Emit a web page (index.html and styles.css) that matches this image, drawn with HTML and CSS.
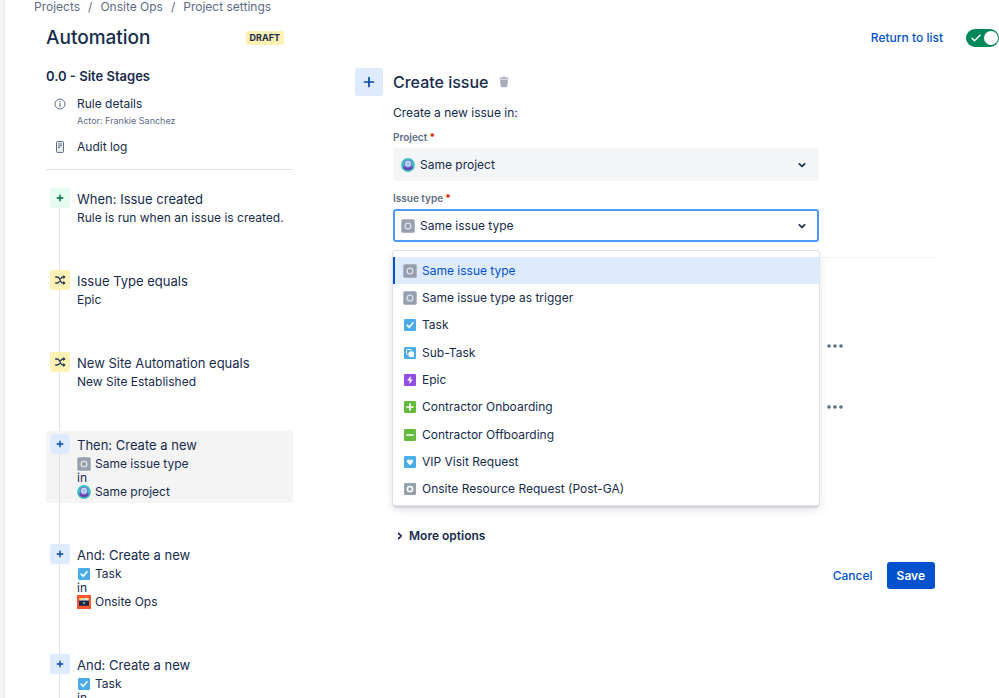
FILE: index.html
```html
<!DOCTYPE html>
<html lang="en">
<head>
<meta charset="utf-8">
<meta name="viewport" content="width=device-width, initial-scale=1">
<title>Automation</title>
<link rel="stylesheet" href="styles.css">
</head>
<body>
<svg class="sprite" aria-hidden="true">
  <symbol id="i-plus" viewBox="0 0 20 20"><path d="M10 7.200v5.600M7.200 10h5.600" stroke="currentColor" stroke-width="1.400" stroke-linecap="round"/></symbol>
  <symbol id="i-shuffle" viewBox="0 0 20 20"><g fill="none" stroke="currentColor" stroke-width="1.400" stroke-linecap="round"><path d="M5.700 7h1.500c1 0 1.500.4 2.100 1.300l1.600 3.200c.6 1 1.100 1.500 2.200 1.500h.9M5.700 13h1.500c1 0 1.500-.4 2.100-1.300M10.900 8.300c.6-.9 1.100-1.300 2.200-1.300h.9"/></g><path d="M13.200 4.900 15.700 7l-2.500 2.100zM13.200 10.900l2.500 2.100-2.500 2.100z" fill="currentColor"/></symbol>
  <symbol id="i-generic" viewBox="0 0 14 14"><rect x=".3" y=".3" width="13.400" height="13.400" rx="1.500" fill="#97a0af"/><circle cx="7" cy="7" r="2.900" fill="none" stroke="#dfe3e8" stroke-width="1.300"/></symbol>
  <symbol id="i-request" viewBox="0 0 14 14"><rect x="1" y="1" width="12" height="12" rx="1.200" fill="#97a0af"/><circle cx="7" cy="7" r="2.600" fill="none" stroke="#fff" stroke-width="1.500"/></symbol>
  <symbol id="i-task" viewBox="0 0 14 14"><rect x="1" y="1" width="12" height="12" rx="1.200" fill="#4bade8"/><path d="M4.200 7.200 6.200 9.300 10 4.800" fill="none" stroke="#fff" stroke-width="1.600" stroke-linecap="round" stroke-linejoin="round"/></symbol>
  <symbol id="i-subtask" viewBox="0 0 14 14"><rect x="1" y="1" width="12" height="12" rx="1.200" fill="#4bade8"/><rect x="3.500" y="3.500" width="4.800" height="4.800" rx=".8" fill="none" stroke="#fff"/><rect x="5.700" y="5.700" width="5.300" height="5.300" rx=".8" fill="#fff"/></symbol>
  <symbol id="i-epic" viewBox="0 0 14 14"><rect x="1" y="1" width="12" height="12" rx="1.200" fill="#904ee2"/><path d="M7.600 3 4.200 7.500h2.300V11l3.400-4.500H7.600z" fill="#fff"/></symbol>
  <symbol id="i-add" viewBox="0 0 14 14"><rect x="1" y="1" width="12" height="12" rx="1.200" fill="#63ba3c"/><path d="M7 4v6M4 7h6" stroke="#fff" stroke-width="1.700" stroke-linecap="round"/></symbol>
  <symbol id="i-remove" viewBox="0 0 14 14"><rect x="1" y="1" width="12" height="12" rx="1.200" fill="#63ba3c"/><path d="M4 7h6" stroke="#fff" stroke-width="1.700" stroke-linecap="round"/></symbol>
  <symbol id="i-heart" viewBox="0 0 14 14"><rect x="1" y="1" width="12" height="12" rx="1.200" fill="#4bade8"/><path d="M7 10.300 4.300 7.600C2.800 6 5 3.300 7 5.200c2-1.900 4.200.8 2.700 2.400z" fill="#fff"/></symbol>
  <symbol id="i-project" viewBox="0 0 14 14"><circle cx="7" cy="7" r="6.900" fill="#3cc0c4"/><path d="M2 8.200h10c-.2 2.500-2.300 4.100-5 4.100s-4.800-1.600-5-4.100z" fill="#6b3fa8"/><circle cx="7" cy="5.900" r="4" fill="#7b6fd6"/><circle cx="7" cy="5.700" r="2.900" fill="#cfe8f9"/><circle cx="7" cy="5.700" r="1.200" fill="none" stroke="#5f8fd0" stroke-width=".7"/></symbol>
  <symbol id="i-ops" viewBox="0 0 14 14"><path d="M0 0h14v14H0z" fill="#ff5630"/><path d="M2.300 3h9.400v3H2.300z" fill="#ffe3d6"/><path d="M3.300 3h2v1.500h-2z" fill="#ffc400"/><path d="M6 3h2v1.500H6z" fill="#79e2f2"/><path d="M2 5.500h10v5.300H2z" fill="#172b4d"/><circle cx="7" cy="8" r=".9" fill="#c1c7d0"/></symbol>
  <symbol id="i-chevron" viewBox="0 0 10 10"><path d="M2.300 3.800 5 6.300l2.700-2.500" fill="none" stroke="currentColor" stroke-width="1.700" stroke-linecap="round" stroke-linejoin="round"/></symbol>
  <symbol id="i-more" viewBox="0 0 16 6"><g fill="#5e6c84"><circle cx="2" cy="3" r="1.800"/><circle cx="8" cy="3" r="1.800"/><circle cx="14" cy="3" r="1.800"/></g></symbol>
</svg>

<div class="page">
  <nav class="crumbs" aria-label="Breadcrumbs">
    <a href="#">Projects</a><span>/</span><a href="#">Onsite Ops</a><span>/</span><a href="#">Project settings</a>
  </nav>

  <header class="header">
    <div class="header-title">
      <h1>Automation</h1>
      <span class="badge">DRAFT</span>
    </div>
    <div class="header-actions">
      <a href="#">Return to list</a>
      <label class="toggle">
        <input type="checkbox" checked aria-label="Rule enabled">
        <svg viewBox="0 0 10 8"><path d="M1 4.300 3.500 6.700 9 1.200" fill="none" stroke="#fff" stroke-width="1.500" stroke-linecap="round" stroke-linejoin="round"/></svg>
      </label>
    </div>
  </header>

  <div class="columns">
    <aside class="sidebar">
      <h2>0.0 - Site Stages</h2>
      <nav class="rule-nav">
        <a class="rule-link" href="#">
          <svg class="nav-icon" viewBox="0 0 12 12"><circle cx="6" cy="6" r="5" fill="none" stroke="#5e6c84"/><path d="M6 5.500v2.800" stroke="#5e6c84" stroke-width="1.200" stroke-linecap="round"/><circle cx="6" cy="3.700" r=".7" fill="#5e6c84"/></svg>
          <span class="rule-text">Rule details<small>Actor: Frankie Sanchez</small></span>
        </a>
        <a class="rule-link" href="#">
          <svg class="nav-icon" viewBox="0 0 12 12"><rect x="2.500" y=".6" width="7" height="10.800" rx=".8" fill="#ebecf0" stroke="#5e6c84"/><path d="M4 3h4M4 4.800h4M4 6.600h2" stroke="#5e6c84" stroke-width=".9"/></svg>
          <span class="rule-text">Audit log</span>
        </a>
      </nav>

      <ol class="steps">
        <li class="step">
          <span class="step-icon trigger"><svg><use href="#i-plus"/></svg></span>
          <div><h3>When: Issue created</h3><p>Rule is run when an issue is created.</p></div>
        </li>
        <li class="step">
          <span class="step-icon condition"><svg><use href="#i-shuffle"/></svg></span>
          <div><h3>Issue Type equals</h3><p>Epic</p></div>
        </li>
        <li class="step">
          <span class="step-icon condition"><svg><use href="#i-shuffle"/></svg></span>
          <div><h3>New Site Automation equals</h3><p>New Site Established</p></div>
        </li>
        <li class="step selected">
          <span class="step-icon action"><svg><use href="#i-plus"/></svg></span>
          <div><h3>Then: Create a new</h3>
            <p><svg class="type"><use href="#i-generic"/></svg>Same issue type</p><p>in</p>
            <p><svg class="type"><use href="#i-project"/></svg>Same project</p></div>
        </li>
        <li class="step">
          <span class="step-icon action"><svg><use href="#i-plus"/></svg></span>
          <div><h3>And: Create a new</h3>
            <p><svg class="type"><use href="#i-task"/></svg>Task</p><p>in</p>
            <p><svg class="type"><use href="#i-ops"/></svg>Onsite Ops</p></div>
        </li>
        <li class="step">
          <span class="step-icon action"><svg><use href="#i-plus"/></svg></span>
          <div><h3>And: Create a new</h3>
            <p><svg class="type"><use href="#i-task"/></svg>Task</p><p>in</p></div>
        </li>
      </ol>
    </aside>

    <main class="main">
      <div class="main-head">
        <span class="main-icon"><svg viewBox="0 0 28 28"><path d="M14 9.500v9M9.500 14h9" stroke="currentColor" stroke-width="1.700" stroke-linecap="round"/></svg></span>
        <h2>Create issue</h2>
        <button class="icon-btn" type="button" aria-label="Delete">
          <svg class="trash" viewBox="0 0 10 12"><path d="M.5 1.500h2.700L4 .6h2l.8.9h2.700v1.300h-9zM1 3.600h8l-.7 6.500c-.1.700-.5 1.200-1.200 1.200H2.900c-.7 0-1.100-.5-1.200-1.200z" fill="#a5adba"/></svg>
        </button>
      </div>

      <form class="form">
        <p class="intro">Create a new issue in:</p>
        <div class="field">
          <label for="project">Project<b>*</b></label>
          <div class="select">
            <select id="project"><option>Same project</option></select>
            <svg class="type"><use href="#i-project"/></svg>
            <svg class="chevron"><use href="#i-chevron"/></svg>
          </div>
        </div>
        <div class="field">
          <label for="type">Issue type<b>*</b></label>
          <div class="select open">
            <select id="type"><option>Same issue type</option></select>
            <svg class="type"><use href="#i-generic"/></svg>
            <svg class="chevron"><use href="#i-chevron"/></svg>
            <ul class="menu" role="listbox" aria-label="Issue type">
              <li role="option" aria-selected="true"><svg class="type"><use href="#i-generic"/></svg>Same issue type</li>
              <li role="option"><svg class="type"><use href="#i-generic"/></svg>Same issue type as trigger</li>
              <li role="option"><svg class="type"><use href="#i-task"/></svg>Task</li>
              <li role="option"><svg class="type"><use href="#i-subtask"/></svg>Sub-Task</li>
              <li role="option"><svg class="type"><use href="#i-epic"/></svg>Epic</li>
              <li role="option"><svg class="type"><use href="#i-add"/></svg>Contractor Onboarding</li>
              <li role="option"><svg class="type"><use href="#i-remove"/></svg>Contractor Offboarding</li>
              <li role="option"><svg class="type"><use href="#i-heart"/></svg>VIP Visit Request</li>
              <li role="option"><svg class="type"><use href="#i-request"/></svg>Onsite Resource Request (Post-GA)</li>
            </ul>
          </div>
        </div>

        <div class="extra">
          <button class="icon-btn" type="button" aria-label="Field actions"><svg class="more"><use href="#i-more"/></svg></button>
          <button class="icon-btn" type="button" aria-label="Field actions"><svg class="more"><use href="#i-more"/></svg></button>
        </div>

        <button class="more-options" type="button"><svg viewBox="0 0 10 10"><path d="M3.600 2.300 6.300 5 3.600 7.700" fill="none" stroke="currentColor" stroke-width="1.700" stroke-linecap="round" stroke-linejoin="round"/></svg>More options</button>

        <div class="actions">
          <button class="btn link" type="button">Cancel</button>
          <button class="btn primary" type="submit">Save</button>
        </div>
      </form>
    </main>
  </div>
</div>
</body>
</html>
```
FILE: styles.css
```css
* { box-sizing: border-box; }

body {
  margin: 0;
  background: #fff;
  color: #172b4d;
  font: 12px/16px Inter, "Liberation Sans", sans-serif;
}

h1, h2, h3, p, ol, ul { margin: 0; padding: 0; font-weight: 400; }
ol, ul { list-style: none; }
a { color: inherit; text-decoration: none; }
button, select { font: inherit; color: inherit; }
button { border: 0; background: none; padding: 0; cursor: pointer; }
svg { display: block; flex: none; }
.sprite { position: absolute; width: 0; height: 0; }

.page {
  height: 100vh;
  overflow: hidden;
  border-left: 4px solid #f4f5f7;
  box-shadow: inset 1px 0 #ebecf0;
}

.crumbs { display: flex; gap: 8px; padding-left: 30px; line-height: 14px; color: #5e6c84; }

.header {
  display: flex;
  justify-content: space-between;
  align-items: center;
  height: 48px;
  padding-left: 42px;
}
.header-title { display: flex; justify-content: space-between; align-items: center; width: 238px; }
h1 { font-size: 19px; line-height: 24px; font-weight: 500; }
.badge {
  padding: 0 4px;
  border-radius: 3px;
  background: #fff0b3;
  font-size: 9px;
  line-height: 14px;
  font-weight: 700;
}
.header-actions { display: flex; align-items: center; gap: 23px; color: #0052cc; font-weight: 500; }
.toggle {
  display: flex;
  align-items: center;
  justify-content: space-between;
  width: 33px;
  height: 18px;
  padding: 0 1px 0 5px;
  border-radius: 9px;
  background: #00875a;
}
.toggle svg { width: 10px; height: 8px; }
.toggle input { order: 2; appearance: none; width: 14px; height: 14px; margin: 0; border-radius: 50%; background: #fff; }

.columns { display: flex; gap: 62px; padding: 0 64px 0 42px; }

.sidebar { flex: none; width: 247px; padding-top: 6px; }
.sidebar h2 { font-size: 13px; font-weight: 600; }
.rule-nav {
  display: flex;
  flex-direction: column;
  gap: 10px;
  padding: 12px 0 14px 8px;
  border-bottom: 1px solid #dfe1e6;
}
.rule-link { display: flex; align-items: flex-start; gap: 11px; }
.nav-icon { width: 12px; height: 12px; margin-top: 2px; }
.rule-text small { display: block; color: #5e6c84; font-size: 9px; line-height: 17px; }

.steps { display: flex; flex-direction: column; gap: 38px; padding-top: 15px; }
.step { position: relative; display: flex; gap: 7px; padding: 3px 4px 4px; border-radius: 3px; }
.step.selected { background: #f4f4f4; }
.step::before {
  content: "";
  position: absolute;
  top: 10px;
  bottom: -48px;
  left: 13px;
  width: 1px;
  background: #dfe1e6;
}
.step h3 { font-size: 13px; line-height: 23px; }
.step p { display: flex; align-items: center; gap: 4px; line-height: 14px; }
.step-icon { position: relative; flex: none; width: 20px; height: 20px; border-radius: 3px; }
.step-icon svg { width: 20px; height: 20px; }
.trigger { background: #e3fcef; color: #006644; }
.condition { background: #fff0b3; color: #253858; }
.action { background: #deebff; color: #0747a6; }
.type { width: 14px; height: 14px; }

.main { flex: 1; min-width: 0; padding-top: 6px; }
.main-head { display: flex; align-items: center; gap: 10px; }
.main-icon { width: 28px; height: 28px; border-radius: 3px; background: #deebff; color: #0747a6; }
.main-head h2 { font-size: 16px; line-height: 24px; font-weight: 500; }
.trash { width: 10px; height: 12px; }

.form { padding: 9px 0 0 38px; }
.intro { margin-bottom: 8px; }
.field { width: 426px; max-width: 100%; margin-bottom: 9px; }
.field label { display: block; margin-bottom: 3px; color: #5e6c84; font-size: 10px; font-weight: 600; }
.field b { margin-left: 2px; color: #de350b; }

.select { position: relative; display: grid; align-items: center; }
.select > * { grid-area: 1 / 1; }
.select select {
  width: 100%;
  height: 33px;
  padding: 0 28px 0 26px;
  border: 1px solid #f4f5f7;
  border-radius: 3px;
  background: #f4f5f7;
  appearance: none;
  outline: 0;
}
.select.open select { padding: 0 27px 0 25px; border: 2px solid #4c9aff; background: #fff; }
.select > svg { pointer-events: none; }
.select > .type { margin-left: 8px; }
.chevron { width: 10px; height: 10px; justify-self: end; margin-right: 12px; }

.menu {
  position: absolute;
  z-index: 1;
  top: 42px;
  left: 0;
  right: 0;
  display: grid;
  grid-auto-rows: 1fr;
  height: 254px;
  padding: 6px 0 2px;
  border-radius: 3px;
  background: #fff;
  box-shadow: 0 0 0 1px #dfe1e6, 0 3px 1px #d3d5da, 0 4px 10px rgba(9, 30, 66, .15);
}
.menu li { display: flex; align-items: center; gap: 5px; padding-left: 10px; }
.menu [aria-selected] { background: #deebff; box-shadow: inset 2px 0 #0052cc; color: #0052cc; }

.extra {
  display: flex;
  flex-direction: column;
  gap: 55px;
  margin-top: 15px;
  padding: 85px 0 0 434px;
  border-top: 1px solid #f4f5f7;
}
.more { width: 16px; height: 6px; }

.more-options { display: flex; align-items: center; gap: 4px; margin: 118px 0 0 2px; font-weight: 600; }
.more-options svg { width: 10px; height: 10px; }

.actions { display: flex; justify-content: flex-end; gap: 4px; margin-top: 18px; }
.btn { height: 27px; padding: 0 10px; border-radius: 3px; font-weight: 500; }
.link { color: #0052cc; }
.primary { background: #0052cc; color: #fff; font-weight: 600; }
```
